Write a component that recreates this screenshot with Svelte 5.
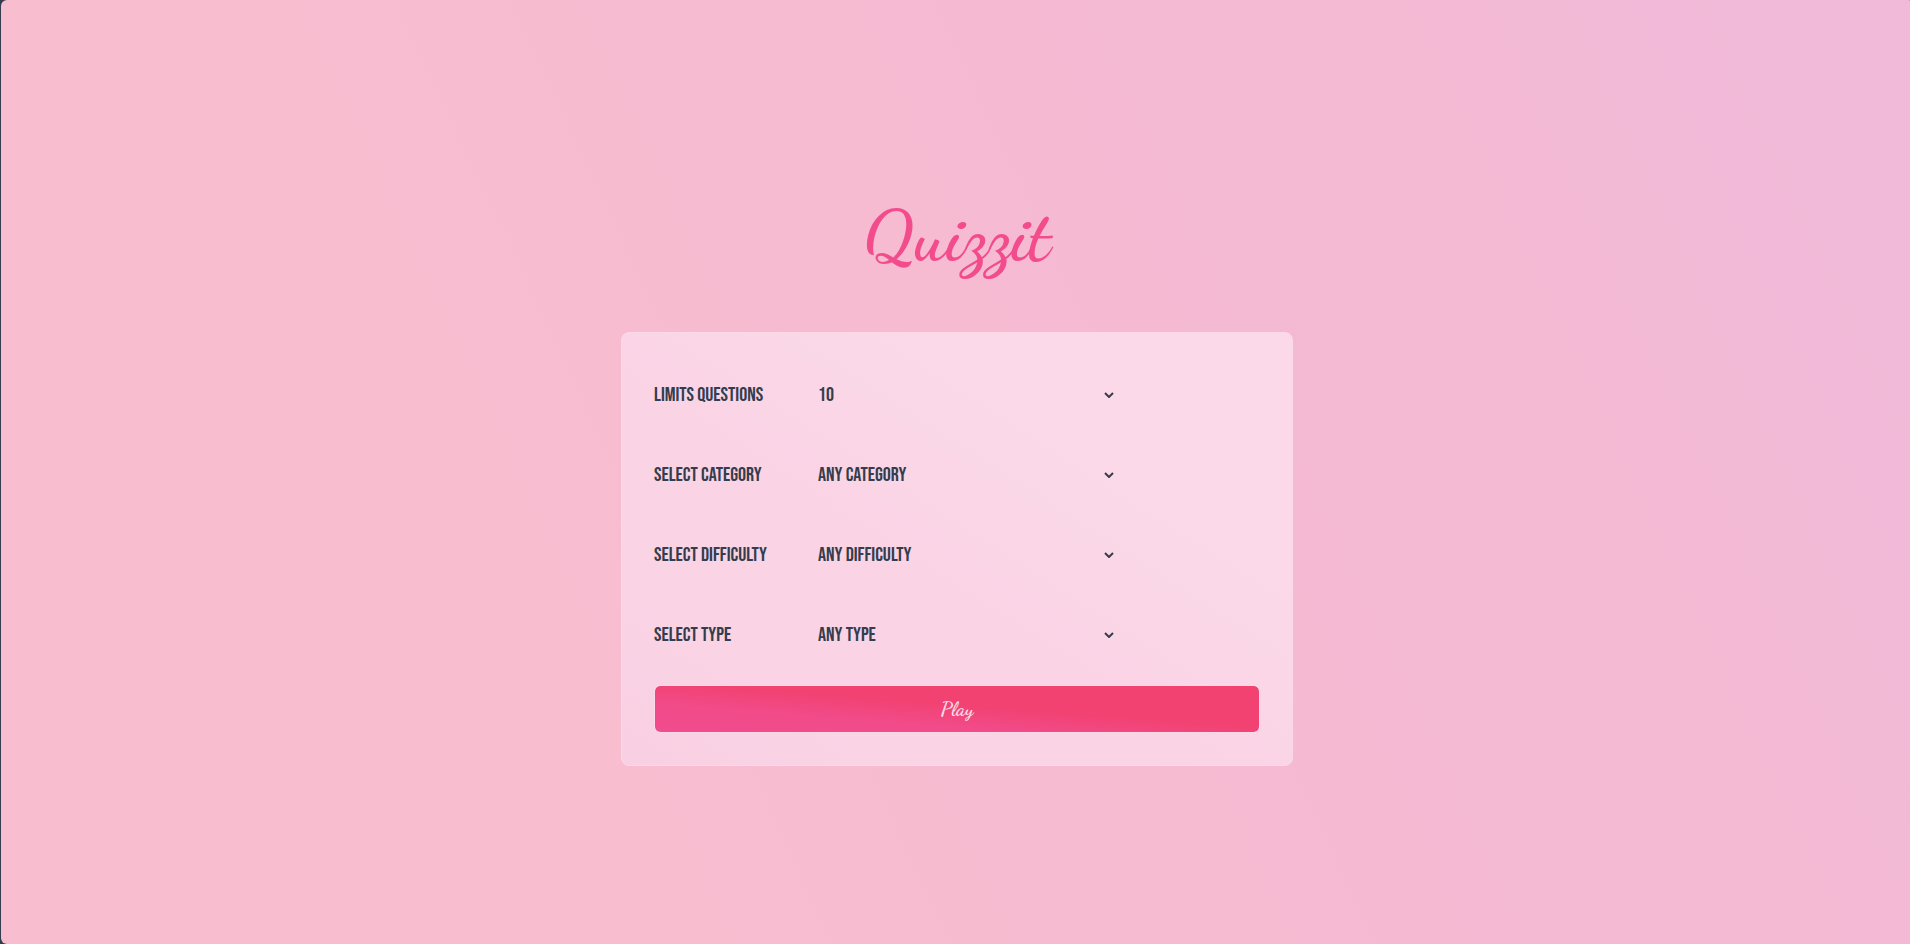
<script>
  const fields = [
    { id: 'limit', label: 'Limits questions', options: ['10', '20', '30', '40', '50'] },
    {
      id: 'category',
      label: 'Select category',
      options: ['Any category', 'General knowledge', 'Film', 'Music', 'History', 'Sports'],
    },
    { id: 'difficulty', label: 'Select difficulty', options: ['Any difficulty', 'Easy', 'Medium', 'Hard'] },
    { id: 'type', label: 'Select type', options: ['Any type', 'Multiple choice', 'True / False'] },
  ];

  let values = $state(fields.map((field) => field.options[0]));
</script>

<main class="page">
  <h1>Quizzit</h1>

  <form class="card" onsubmit={(event) => event.preventDefault()}>
    {#each fields as field, i (field.id)}
      <div class="row">
        <label for={field.id}>{field.label}</label>
        <div class="select">
          <select id={field.id} bind:value={values[i]}>
            {#each field.options as option}
              <option>{option}</option>
            {/each}
          </select>
          <svg viewBox="0 0 10 6" aria-hidden="true">
            <path d="M1 1l4 4 4-4" />
          </svg>
        </div>
      </div>
    {/each}
    <button type="submit">Play</button>
  </form>
</main>

<style>
  :global(body) {
    margin: 0;
    background: #343d4d;
  }

  .page {
    box-sizing: border-box;
    min-height: 100vh;
    margin-left: 1px;
    padding: 196px 16px 32px 19px;
    display: flex;
    flex-direction: column;
    align-items: center;
    border-radius: 6px 1px 0 6px;
    background: linear-gradient(65deg, #f9bdd0 0%, #f9bdd0 30%, #f5b9d2 62%, #f4b9d3 76%, #f1bad8 92%);
    color: #343d4d;
    font-family: 'Bebas Neue', 'Liberation Sans Narrow', 'Liberation Sans', sans-serif;
  }

  h1 {
    margin: 0 0 56px;
    color: #f24c8c;
    font: 700 72px/80px 'Dancing Script', 'Liberation Serif', serif;
  }

  .card {
    box-sizing: border-box;
    width: 100%;
    max-width: 672px;
    padding: 22px 32px 32px;
    border: 1px solid #fbdae8;
    border-radius: 8px;
    background: linear-gradient(to top right, #f9d0e3, #fad3e5 20%, #fad3e5 40%, #fbd9e8 72%, #fbd9e8);
  }

  .row {
    display: grid;
    grid-template-columns: 164px 300px;
    align-items: center;
    height: 80px;
    text-transform: uppercase;
    font-size: 20px;
    font-weight: 400;
  }

  .select {
    position: relative;
    display: flex;
    align-items: center;
  }

  select {
    appearance: none;
    width: 100%;
    height: 40px;
    margin: 0;
    padding: 0 24px 0 0;
    border: 0;
    background: transparent;
    color: inherit;
    font: inherit;
    text-transform: inherit;
  }

  .select svg {
    position: absolute;
    right: 4px;
    width: 10px;
    height: 6px;
    fill: none;
    stroke: #343d4d;
    stroke-width: 2;
    pointer-events: none;
  }

  button {
    box-sizing: border-box;
    display: block;
    width: 100%;
    height: 48px;
    margin-top: 10px;
    padding: 0;
    border: 1px solid #fbdae8;
    border-radius: 6px;
    background: linear-gradient(to top right, #f24b8e, #f24b8a 30%, #f14272 55%, #f14272) padding-box;
    color: #fbdae8;
    font: 700 20px/28px 'Dancing Script', 'Liberation Serif', serif;
  }
</style>
